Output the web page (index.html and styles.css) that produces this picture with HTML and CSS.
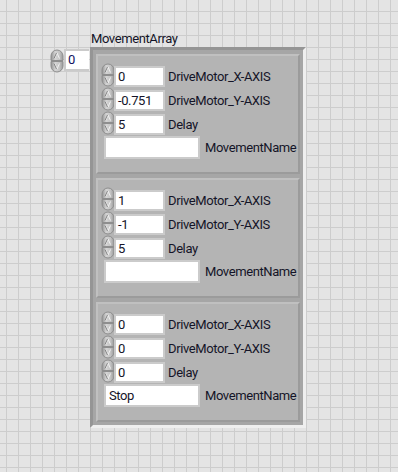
FILE: index.html
```html
<!DOCTYPE html>
<html>
    <head>
        <title>MovementArray</title>
        <link rel="stylesheet" href="styles.css">
    </head>
    <body>
        <svg class="defs" width="0" height="0">
            <defs>
                <linearGradient id="spinFill" x1="0" x2="1">
                    <stop offset="0" stop-color="#909090"/>
                    <stop offset="0.35" stop-color="#d4d4d4"/>
                    <stop offset="0.7" stop-color="#c4c4c4"/>
                    <stop offset="1" stop-color="#9a9a9a"/>
                </linearGradient>
                <symbol id="spin" viewBox="0 0 14 24">
                    <path d="M1 11.5 V7 A6 6 0 0 1 13 7 V11.5 Z" fill="url(#spinFill)" stroke="#8e8e8e"/>
                    <path d="M1 12.5 V17 A6 6 0 0 0 13 17 V12.5 Z" fill="url(#spinFill)" stroke="#8e8e8e"/>
                    <path d="M4.5 9.5 L7 4 L9.5 9.5" fill="none" stroke="#f2f2f2"/>
                    <path d="M4 9.5 L6.5 4" fill="none" stroke="#6a6a6a" stroke-width="0.8"/>
                    <path d="M4.5 14.5 L7 20 L9.5 14.5" fill="none" stroke="#f2f2f2"/>
                    <path d="M4 14.5 L6.5 20" fill="none" stroke="#6a6a6a" stroke-width="0.8"/>
                </symbol>
            </defs>
        </svg>

        <div class="panel">
            <div class="index">
                <svg class="spin"><use href="#spin"/></svg>
                <div class="num index-num">0</div>
            </div>

            <div class="array">
                <div class="caption">MovementArray</div>
                <div class="frame">
                    <div class="cluster">
                        <div class="row"><svg class="spin"><use href="#spin"/></svg><div class="num">0</div><span class="lbl">DriveMotor_X-AXIS</span></div>
                        <div class="row"><svg class="spin"><use href="#spin"/></svg><div class="num">-0.751</div><span class="lbl">DriveMotor_Y-AXIS</span></div>
                        <div class="row"><svg class="spin"><use href="#spin"/></svg><div class="num">5</div><span class="lbl">Delay</span></div>
                        <div class="row str-row"><div class="str"></div><span class="lbl">MovementName</span></div>
                    </div>
                    <div class="cluster">
                        <div class="row"><svg class="spin"><use href="#spin"/></svg><div class="num">1</div><span class="lbl">DriveMotor_X-AXIS</span></div>
                        <div class="row"><svg class="spin"><use href="#spin"/></svg><div class="num">-1</div><span class="lbl">DriveMotor_Y-AXIS</span></div>
                        <div class="row"><svg class="spin"><use href="#spin"/></svg><div class="num">5</div><span class="lbl">Delay</span></div>
                        <div class="row str-row"><div class="str"></div><span class="lbl">MovementName</span></div>
                    </div>
                    <div class="cluster">
                        <div class="row"><svg class="spin"><use href="#spin"/></svg><div class="num">0</div><span class="lbl">DriveMotor_X-AXIS</span></div>
                        <div class="row"><svg class="spin"><use href="#spin"/></svg><div class="num">0</div><span class="lbl">DriveMotor_Y-AXIS</span></div>
                        <div class="row"><svg class="spin"><use href="#spin"/></svg><div class="num">0</div><span class="lbl">Delay</span></div>
                        <div class="row str-row"><div class="str">Stop</div><span class="lbl">MovementName</span></div>
                    </div>
                </div>
            </div>
        </div>
    </body>
</html>
```

FILE: styles.css
```css
body
{
    margin: 0;
    width: 398px;
    height: 472px;
    overflow: hidden;
    background-color: #e4e4e4;
    background-image:
        linear-gradient(90deg, #cdcdcd 1px, transparent 1px),
        linear-gradient(#cdcdcd 1px, transparent 1px);
    background-size: 12px 12px;
    background-position: 6px 11px;
    font-family: Roboto, "Liberation Sans", sans-serif;
    font-size: 13px;
    letter-spacing: -0.4px;
    color: #141428;
}

.defs
{
    display: block;
    width: 0;
    height: 0;
    overflow: hidden;
}

.panel
{
    display: flex;
    align-items: flex-start;
    padding: 30px 0 0 50px;
}

.index
{
    display: flex;
    align-items: flex-start;
    width: 40px;
    margin-top: 19px;
}

.spin
{
    flex: none;
    width: 14px;
    height: 24px;
}

.num
{
    box-sizing: border-box;
    width: 51px;
    height: 21px;
    margin-left: -1px;
    padding-left: 2px;
    border: 2px solid #cbcbcb;
    background: #ffffff;
    line-height: 17px;
    white-space: nowrap;
}

.index-num
{
    width: 25px;
    height: 22px;
    margin-left: 0;
    border-right: none;
    line-height: 18px;
    color: #101060;
}

.caption
{
    height: 17px;
    padding-left: 1px;
    line-height: 17px;
}

.frame
{
    box-sizing: border-box;
    display: flex;
    flex-direction: column;
    gap: 4px;
    width: 216px;
    height: 381px;
    padding: 4px 3px 3px 3px;
    border: 3px solid;
    border-color: #959595 #efefef #efefef #959595;
    background: #a6a6a6;
}

.cluster
{
    box-sizing: border-box;
    height: 120px;
    padding: 7px 0 0 3px;
    border: 2px solid;
    border-color: #c0c0c0 #9b9b9b #9b9b9b #c0c0c0;
    background: #b4b4b4;
}

.row
{
    display: flex;
    align-items: flex-end;
    height: 24px;
}

.lbl
{
    margin-left: 3px;
    line-height: 21px;
    white-space: nowrap;
}

.str-row
{
    height: 23px;
    margin-top: 1px;
    align-items: center;
}

.str
{
    box-sizing: border-box;
    width: 96px;
    height: 23px;
    margin-left: 3px;
    padding-left: 3px;
    border: 2px solid #cbcbcb;
    background: #ffffff;
    line-height: 19px;
}

.str-row .lbl
{
    margin-left: 5px;
}
```
